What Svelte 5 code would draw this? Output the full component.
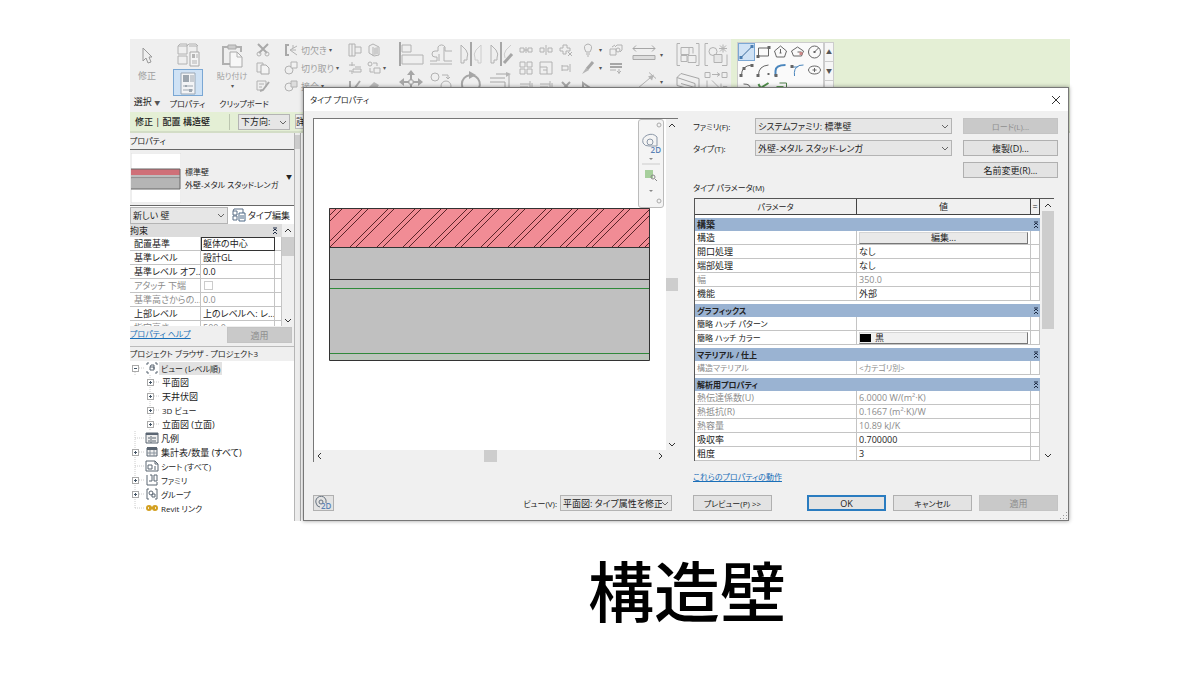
<script lang="ts">
  type Part = { d: string; fill?: string; stroke?: string; sw?: number };
  type Row = { name: string; value: string; off?: boolean; kind?: string };

  const line = (d: string, stroke = '#b2b2b2', sw = 1): Part => ({ d, stroke, sw });
  const solid = (d: string, fill = '#b5b5b5', stroke = 'none'): Part => ({ d, fill, stroke });
  const ring = (x: number, y: number, r: number) =>
    `M${x - r} ${y}a${r} ${r} 0 1 0 ${2 * r} 0a${r} ${r} 0 1 0 ${-2 * r} 0`;

  // long katakana runs are set one size down
  const isKana = (text: string) => /[ァ-ー]{3}/.test(text);

  // every icon is drawn round 0,0
  const cursor = [line('M-4-8V5L-1 2 1 7 4 6 2 1H5Z', '#999')];
  const typeBox = [
    line('M-10-9h9v8h-9zM1-9h8v8M-10 1h9v8h-9zM-10-9l2-2h7v2l2-2h7l2 2'),
    solid('M2-3h9v14H2z', '#f4f4f4', '#a9a9a9'),
    solid('M4-1h3v4H4z'),
    line('M9-1v4M4 6h5M4 8h5')
  ];
  const properties = [
    solid('M-7-10H7V11H-7z', '#f3f4f6', '#9aa7b5'),
    solid('M-5-8H1V-1H-5z', '#9da6af'),
    line('M3-8v7M5-8v7', '#9da6af'),
    line('M-5 3H5M-5 7H5', '#9da6af'),
    solid('M-3 2h2v2h-2zM1 6h3v3H1z', '#9da6af')
  ];
  const paste = [
    line('M-3-9h-6V8h7M4-9h5v5', '#b0b0b0', 2),
    solid('M-4-11h8v4h-8z', '#ccc', '#a9a9a9'),
    solid('M-2-4H5L10 1V11H-2z', '#f7f7f7', '#a9a9a9'),
    line('M5-4V1h5')
  ];
  const cut = [line('M-5-6 4 3M5-6-4 3', '#a9a9a9', 2), line(ring(-4, 4, 2)), line(ring(4, 4, 2))];
  const copy = [line('M-6-5h6v9h-6z'), solid('M-2-3H3L6 0V6h-8z', '#f4f4f4', '#a9a9a9')];
  const brush = [line('M-6-5H3V1M-6-5V4h5M-4-2h5M-4 1h3'), line('M6-4 0 4-3 5', '#a9a9a9', 2)];
  const cope = [line('M-5-5V5M-6-5h4M-6 5h4', '#a9a9a9', 2), line('M6-4-1 0 6 5M2-5v3M0 0h5')];
  const overlap = [line(ring(-2, 2, 4)), solid('M0-6h6v6H0z', '#f2f2f2', '#b2b2b2')];
  const join = [line(ring(-2, 1, 4)), solid('M0-5h6v6H0z', '#ddd', '#b2b2b2')];
  const wallJoin = [line('M-6-6h6v3h6v6H0v3h-6z'), line('M-3-6V6M0-3v6')];
  const splitFace = [line('M-5-4-1-6 5-3V5L0 6-5 3zM-1-3V6'), solid('M0-2 4-3V4L0 5z', '#ccc')];
  const beam = [line('M-6-3H0M-3-6v4M-2 1h8v3h-8zM-6 3h3v3'), line('M0-1h6')];
  const linkTool = [line(ring(-4, -4, 2)), line('M0 0h6v5H0zM-4 0v4h3M-1-5h4v3')];
  const edit = [line('M-5-5V5h7M5-5-1 3', '#a9a9a9', 2)];
  const hammer = [solid('M-5 1 0-4 5-1 1 5z', '#bbb')];

  const modifyBig = [
    [line('M-11-12V12', '#a6a6a6', 2), line('M-9-9H0v7h-9zM-9 1H12v9H-9z')],
    [line('M-11 7h7V3h-2a3 3 0 0 1 0-6h3v-4a4 4 0 0 1 7 0v4h7M-2 7V0M3-7V7h8'), line('M-11 10H11')],
    [line('M0-12V12', '#a6a6a6', 2), line('M-10 9V-9l5 5q3 4 1 8v2h-3v3z'), { ...line('M10 9V-9L5-4Q2 0 4 4v2h3v3z'), stroke: '#ccc' }],
    [line('M0-12V12', '#a6a6a6', 2), line('M-10 9V-9l5 5q3 4 1 8v2h-3v3z'), line('M10-9 5-4Q2 0 4 4', '#ccc'), line('M11 0 3 9', '#a6a6a6', 3)],
    [line('M0-9V9M-9 0H9', '#a6a6a6', 2), solid('M-4-7 0-12 4-7zM-4 7 0 12 4 7zM-7-4-12 0-7 4zM7-4 12 0 7 4z', '#a6a6a6'), solid('M-2-2h4v4h-4z', '#f0f0f0', '#a6a6a6')],
    [line(ring(-6, -5, 4)), line(ring(5, 4, 5)), line('M1-7h6v4M5-5l2 2 2-2')],
    [line('M-7 8A9 9 0 1 1 8 6', '#a6a6a6', 2), solid('M-2-11 5-7-2-3z', '#a6a6a6')],
    [line('M-11-4H4M-11 0H4V11M8-7V11M-5-8H8', '#a6a6a6'), solid('M5-10 10-8 5-5z')]
  ];
  const modifySmall = [
    [line('M-6-2h4v4h-4zM2-2h4v4H2zM-2 0h4M0-3v6')],
    [line('M-6-2h4v4h-4zM2-2h4v4H2zM0-5V5')],
    [line('M-6-2h3v-3h4v3h3v3h-4v3h-3v-3h-3zM2 2l4 4M6 2 2 6')],
    [line('M-6-6h5v5h-5zM1-6h5v5H1zM-6 1h5v5h-5zM1 1h5v5H1z')],
    [line('M-6-6H6V6H-6zM-6-1H1V6M-3 2h4')],
    [line('M-4-3v6M-4-2h6v4h-6M4-4v8')],
    [line('M-6-2H4M-6 1H2M4-5V5M6-3v6')],
    [line('M-6-2H4M-6 1H2M4-5V5M6-3v6')],
    [line('M-4-4 4 4M4-4-4 4', '#a6a6a6', 2)]
  ];
  const view = [
    [line('M-2 2q-4-7 2-8 6 1 2 8zM-2 4h4M-1 6h2')],
    [line('M-6-1h6v6h-6zM-1-3l2-2h5v5l-2 2M-1-5l-3 2'), line(ring(2, 0, 2))],
    [line('M5-6-1 1', '#a6a6a6', 3), solid('M-2 0-6 6 1 2z')],
    [line('M-6-4H6M-6-1H6', '#a6a6a6', 2), line('M-6 2h6M3 1v5M1 3l2 2 2-2')],
    [line('M-5-3 5 4h-10z', '#a6a6a6', 2)],
    []
  ];
  const measure = [
    [line('M-11-6H11M-8-9l-3 3 3 3M8-9l3 3-3 3', '#a6a6a6'), solid('M-11 1h22v4h-22z', '#ddd', '#a9a9a9')],
    [line('M-9 9 9-6M5-9l7 6M-12 6l6 6'), solid('M4-5 10-7 8-1z')]
  ];
  const create = [
    [line('M-8-11h-3v22h3M8-11h3v22H8'), line('M-7-7h8v7h-8zM-7 1h6v6h-6zM0 1h8v7H0zM1-7h4v6')],
    [line('M-8-11h-3v22h3M6 11h5V0'), line(ring(-3, -3, 4)), solid('M-2 0H6v8h-8z', '#e6e6e6', '#b2b2b2'), line('M7-10v8M3-6h8M4-9l6 6M10-9 4-3')],
    [line('M-11-4-7-8 11-3V10L-11 4zM-11-4 7 2v9M-7 2 7 6', '#a6a6a6')],
    [line('M-11-9h5v5h-5zM6-9h5v5H6zM-4-7h7M1-9l3 2-3 2M-9-1V7M-4-1 3 6M1 6h4V2M7 5h4v4H7z')]
  ];
  const dark = '#666';
  const blue = '#4a86bd';
  const draw = [
    [line('M-5 5 5-5', '#38699a'), solid('M-7 4h3v3h-3zM4-7h3v3H4z', '#4b7db0')],
    [line('M-5-4H5V4H-5z', dark), solid('M-7 3h3v3h-3zM4-6h3v3H4z', dark)],
    [line('M0-6 6-1 4 5h-8L-6-1zM0-3v4', dark), line('M-1 1h2', dark)],
    [line('M0-5 6-1 4 4h-8L-6-1zM0 0h4', dark), solid('M2 0h3v3H2z', '#c88')],
    [line(ring(0, 0, 6), dark), line('M0 0l4-4', dark), solid('M-1-1h2v2h-2z', dark)],
    [line('M-5 5Q-5-4 5-5', dark), solid('M-7 4h3v3h-3zM4-6h3v3H4zM-4-3h3v3h-3z', dark)],
    [line('M-5 5Q-5-4 5-5', dark), solid('M-7 4h3v3h-3zM4 3h2v2H4z', dark)],
    [line('M-5 6v-5Q-5-5 5-5', blue, 2), solid('M-6 4h3v3h-3z', dark)],
    [line('M-5-3H0Q0-5 6-5M-3 6Q-4-2 1-4', blue), solid('M-7-5h3v3h-3z', dark)],
    [line('M-6 0a6 4 0 1 0 12 0 6 4 0 1 0-12 0M0-2v4M-2 0h4', dark)],
    [line('M-3-4Q5-4 3 1', dark)],
    [line('M-5-4-3 0M5-5-3 0 3 5', '#4f8f4a', 2)],
    [solid('M-4-2h7v7h-7z', '#5f9d58'), line('M-1-5h7v7', '#4d7d48')],
    [],
    []
  ];

  // lower ends of the brick hatch pairs
  const hatch = Array.from({ length: 15 }, (_, i) => 21 + 26 * (i - 2) + Math.round(i / 5));

  const instance: Row[] = [
    { name: '配置基準', value: '躯体の中心', kind: 'focus' },
    { name: '基準レベル', value: '設計GL' },
    { name: '基準レベル オフ...', value: '0.0' },
    { name: 'アタッチ 下端', value: '', off: true, kind: 'check' },
    { name: '基準高さからの...', value: '0.0', off: true },
    { name: '上部レベル', value: '上のレベルへ: レ...' },
    { name: '指定高さ', value: '500.0', off: true }
  ];

  const groups: { title: string; rows: Row[] }[] = [
    {
      title: '構築',
      rows: [
        { name: '構造', value: '編集...', kind: 'button' },
        { name: '開口処理', value: 'なし' },
        { name: '端部処理', value: 'なし' },
        { name: '幅', value: '350.0', off: true },
        { name: '機能', value: '外部' }
      ]
    },
    {
      title: 'グラフィックス',
      rows: [
        { name: '簡略 ハッチ パターン', value: '' },
        { name: '簡略 ハッチ カラー', value: '黒', kind: 'color' }
      ]
    },
    { title: 'マテリアル / 仕上', rows: [{ name: '構造マテリアル', value: '<カテゴリ別>', off: true }] },
    {
      title: '解析用プロパティ',
      rows: [
        { name: '熱伝達係数(U)', value: '6.0000 W/(m²·K)', off: true },
        { name: '熱抵抗(R)', value: '0.1667 (m²·K)/W', off: true },
        { name: '熱容量', value: '10.89 kJ/K', off: true },
        { name: '吸収率', value: '0.700000' },
        { name: '粗度', value: '3' }
      ]
    }
  ];

  const slate = '#5b6673';
  const tree: { label: string; sub?: boolean; box?: string; icon?: Part[]; picked?: boolean }[] = [
    { label: 'ビュー (レベル順)', box: '-', picked: true, icon: [line('M-3-5h-2v2M3-5h2v2M-3 5h-2V3M3 5h2V3M-2-1h4v3h-4zM-2-1l1-2h3v4', slate)] },
    { label: '平面図', sub: true, box: '+' },
    { label: '天井伏図', sub: true, box: '+' },
    { label: '3D ビュー', sub: true, box: '+' },
    { label: '立面図 (立面)', sub: true, box: '+' },
    { label: '凡例', icon: [solid('M-6-5H6V5H-6z', '#eee', slate), solid('M-6-5H6v2H-6z', slate), line('M-4 0h2M-4 3h2M0 0h4M0 3h4M-1-2V5', slate)] },
    { label: '集計表/数量 (すべて)', box: '+', icon: [solid('M-5-4H5V4H-5z', '#eee', slate), solid('M-5-5H5v3H-5z', slate), line('M-2-2v6M2-2v6M-5 1H5', '#8a949e')] },
    { label: 'シート (すべて)', icon: [solid('M-6-5H3L6-2V5H-6z', '#fff', slate), line('M3-5v3h3M-4-1h4v4h-4zM2 1h2M2 3h2', slate)] },
    { label: 'ファミリ', box: '+', icon: [line('M-5-5V5H5V2M-2-5H0V1h-3M2-5h3v6H2z', slate)] },
    { label: 'グループ', box: '+', icon: [line('M-3-5h-2V5h2M3-5h2V5H3M0 0h3v3H0z', slate), line(ring(-1, -1, 2), slate)] },
    { label: 'Revit リンク', icon: [line('M-5 0a2 2 0 0 1 4 0a2 2 0 0 1-4 0M1 0a2 2 0 0 1 4 0a2 2 0 0 1-4 0M-3 0h6', '#d3a021', 2)] }
  ];
</script>

{#snippet icon(w: number, h: number, parts: Part[])}
  <svg width={w} height={h} viewBox="{-w / 2} {-h / 2} {w} {h}" aria-hidden="true">
    {#each parts as p}
      <path d={p.d} fill={p.fill ?? 'none'} stroke={p.stroke} stroke-width={p.sw ?? 1} />
    {/each}
  </svg>
{/snippet}

{#snippet tools(cls: string, w: number, h: number, list: Part[][])}
  <div class="tools {cls}">
    {#each list as parts, i}
      <button class="tool" aria-label="{cls} {i + 1}">{@render icon(w, h, parts)}</button>
    {/each}
  </div>
{/snippet}

{#snippet pick(id: string, text: string, label?: string)}
  <span class="pick">
    <select {id} aria-label={label}><option>{text}</option></select>
    {@render icon(8, 6, [line('M-3-1 0 2 3-1', '#666')])}
  </span>
{/snippet}

{#snippet chevrons()}
  {@render icon(6, 8, [line('M-2 0 0-2 2 0M-2 3 0 1 2 3M-2-3h4', '#1d2b44')])}
{/snippet}

{#snippet up()}
  {@render icon(12, 12, [line('M-3 2 0-1 3 2', '#333', 1)])}
{/snippet}

{#snippet down()}
  {@render icon(12, 12, [line('M-3-1 0 2 3-1', '#333', 1)])}
{/snippet}

<main class="slide">
  <div class="app">
    <header class="ribbon">
      <section class="group select">
        <button class="tool tall">{@render icon(20, 22, cursor)}<span>修正</span></button>
        <h2>選択 <small>▼</small></h2>
      </section>
      <section class="group props">
        <button class="tool" aria-label="タイプ">{@render icon(26, 28, typeBox)}</button>
        <button class="tool on" aria-label="プロパティ">{@render icon(26, 24, properties)}</button>
        <h2 class="kana">プロパティ</h2>
      </section>
      <section class="group clip">
        <div class="pair">
          <button class="tool tall">{@render icon(26, 26, paste)}<span class="kana">貼り付け</span><small>▾</small></button>
          {@render tools('stack', 16, 18, [cut, copy, brush])}
        </div>
        <h2 class="kana">クリップボード</h2>
      </section>
      <section class="group geometry">
        <div class="labelled">
          <button class="tool">{@render icon(16, 18, cope)}切欠き<small>▾</small></button>
          <button class="tool">{@render icon(16, 18, overlap)}切り取り<small>▾</small></button>
          <button class="tool">{@render icon(16, 18, join)}接合<small>▾</small></button>
        </div>
        {@render tools('double', 18, 18, [wallJoin, splitFace, beam, linkTool, edit, hammer])}
        <small>▾</small>
      </section>
      {@render tools('modify', 30, 28, modifyBig)}
      {@render tools('array', 20, 18, modifySmall)}
      <section class="with-arrows">
        {@render tools('view', 24, 18, view)}
        <div class="arrows near"><small>▾</small><small>▾</small></div>
      </section>
      <section class="with-arrows">
        {@render tools('measure', 32, 27, measure)}
        <div class="arrows"><small>▾</small><small>▾</small></div>
      </section>
      {@render tools('create', 28, 27, create)}
      <section class="drawing">
        {@render tools('draw', 17, 18, draw)}
        <div class="spin">
          <button class="tool" aria-label="上へ"><small>▲</small></button>
          <button class="tool" aria-label="下へ"><small>▼</small></button>
        </div>
      </section>
    </header>

    <div class="options">
      <strong>修正 | 配置 構造壁</strong>
      {@render pick('direction', '下方向:', '方向')}
      <span class="next">詳</span>
    </div>

    <div class="work">
      <aside>
        <h3 class="kana">プロパティ</h3>
        <div class="type">
          <svg class="thumb" viewBox="0 0 50 50" aria-hidden="true">
            <path d="M0 0h50v50H0z" fill="#fff" stroke="#ddd" />
            <path d="M0 16h49v6H0z" fill="#cf7078" />
            <path d="M0 22h49v3H0z" fill="#bdbdbd" />
            <path d="M0 26h49v10H0z" fill="#b5b5b5" />
            <path d="M0 16h49v20H0M0 25h49" fill="none" stroke="#666" />
          </svg>
          <p>標準壁<br />外壁-メタル スタッド-レンガ</p>
          <small>▼</small>
        </div>
        <div class="filter">
          {@render pick('category', '新しい 壁', 'カテゴリ')}
          <button class="tool edit">
            {@render icon(14, 14, [line('M-6-4h4v4h-4zM0-6h4v4M-6 1h4v4h-4zM-6-4l1-2h5', '#5b6f86'), solid('M0-2h6v8H0z', '#fff', '#4d6886'), line('M1 1h4M1 3h4', '#4d6886')])}
            タイプ編集
          </button>
        </div>
        <div class="scrolling">
          <div class="grid">
            <div class="section">拘束 {@render chevrons()}</div>
            <table>
              <tbody>
                {#each instance as row}
                  <tr class:off={row.off}>
                    <th>{row.name}</th>
                    <td class={row.kind}>
                      {#if row.kind === 'check'}<input type="checkbox" disabled aria-label={row.name} />{:else}{row.value}{/if}
                    </td>
                    <td class="end"></td>
                  </tr>
                {/each}
              </tbody>
            </table>
          </div>
          <div class="bar">
            {@render up()}
            <i class="thumb-small"></i>
            {@render down()}
          </div>
        </div>
        <div class="apply">
          <a class="kana" href="#help">プロパティ ヘルプ</a>
          <button class="btn" disabled>適用</button>
        </div>
        <h3 class="browser">プロジェクト ブラウザ - プロジェクト3</h3>
        <ul>
          {#each tree as node, i}
            <li class:sub={node.sub}>
              <svg class="gutter" width="15" height="14" viewBox="0 0 15 14" aria-hidden="true">
                <path d="M5 {i ? 0 : 7}V{i === 10 ? 7 : 14}M5 7H14" stroke="#ccc" stroke-dasharray="1 1" fill="none" />
                {#if node.box}
                  <rect x="2" y="4" width="7" height="7" fill="#aaa" />
                  <rect x="3" y="5" width="5" height="5" fill="#fff" />
                  <rect x="4" y="7" width="3" height="1" fill="#456" />
                  {#if node.box === '+'}<rect x="5" y="6" width="1" height="3" fill="#456" />{/if}
                {/if}
              </svg>
              {#if node.icon}{@render icon(14, 14, node.icon)}{/if}
              <span class:picked={node.picked} class:kana={isKana(node.label)}>{node.label}</span>
            </li>
          {/each}
        </ul>
      </aside>
      <div class="canvas-edge"><i></i></div>
    </div>

    <div class="dialog" role="dialog" aria-labelledby="dialog-title">
      <div class="titlebar">
        <h1 id="dialog-title" class="kana">タイプ プロパティ</h1>
        <button class="tool" aria-label="閉じる">{@render icon(10, 10, [line('M-4-4 4 4M4-4-4 4', '#333')])}</button>
      </div>
      <div class="body">
        <div class="left">
          <div class="viewer">
            <div class="canvas">
              <svg class="wall" viewBox="0 0 321 153" preserveAspectRatio="none" aria-hidden="true">
                <path d="M0 0h321v39H0z" fill="#f18c95" />
                <path d="M0 39h321v113H0z" fill="#c0c0c0" />
                <path d="M0 147h321v5H0z" fill="#bcc6bc" />
                {#each hatch as x}
                  <path d="M{x} 39 l39 -39 M{x + 6} 39 l39 -39" stroke="#5c2429" fill="none" />
                {/each}
                <path d="M0 80.5h321M0 145.5h321" stroke="#2f8a3a" />
                <path d="M0 71.5h321M0 39.5h321" stroke="#333" />
                <path d="M.5 .5h320v152H.5z" fill="none" stroke="#333" />
              </svg>
              <div class="nav">
                {@render icon(24, 86, [
                  line(ring(8, -38, 2), '#aaa'),
                  line(ring(8, 38, 2), '#aaa'),
                  line('M-8-20a8 7 0 0 1 14-6v9h-8a6 5 0 0 1-6-3', '#8c98a8'),
                  line(ring(-1, -21, 3), '#8c98a8'),
                  line('M-9 1H9', '#ccc'),
                  solid('M-6 7H2v8H-6z', '#a6cf9c'),
                  line(ring(2, 14, 2), '#888'),
                  line('M4 16l2 2', '#888'),
                  solid('M-2-5H2L0-3zM-2 27H2L0 29z', '#888')
                ])}
                <b>2D</b>
              </div>
            </div>
            <div class="bar">
              {@render up()}
              <i class="thumb-mid"></i>
              {@render down()}
            </div>
            <div class="bar flat">
              {@render icon(12, 12, [line('M1-3-2 0 1 3', '#333', 1)])}
              <i></i>
              {@render icon(12, 12, [line('M-1-3 2 0-1 3', '#333', 1)])}
            </div>
          </div>
          <div class="foot">
            <button class="btn wheel" aria-label="ホイール">
              {@render icon(16, 14, [line('M-6 0a5 5 0 0 1 10-3v3M-6 0q1 4 4 4', '#66727f'), line(ring(-1, -1, 2), '#66727f')])}<b>2D</b>
            </button>
            <label class="kana" for="view">ビュー(V):</label>
            {@render pick('view', '平面図: タイプ属性を修正')}
          </div>
        </div>

        <div class="right">
          <div class="form">
            <label class="kana" for="family">ファミリ(F):</label>
            {@render pick('family', 'システムファミリ: 標準壁')}
            <button class="btn kana" disabled>ロード(L)...</button>
            <label class="kana" for="type">タイプ(T):</label>
            {@render pick('type', '外壁-メタル スタッド-レンガ')}
            <button class="btn">複製(D)...</button>
            <button class="btn rename">名前変更(R)...</button>
          </div>
          <p class="caption kana">タイプ パラメータ(M)</p>
          <div class="scrolling params">
            <table>
              <thead>
                <tr><th class="kana">パラメータ</th><th>値</th><th class="end">=</th></tr>
              </thead>
              {#each groups as group}
                <tbody>
                  <tr class="cat">
                    <th colspan="2" class:kana={isKana(group.title)}>{group.title}</th>
                    <td>{@render chevrons()}</td>
                  </tr>
                  {#each group.rows as row}
                    <tr class:off={row.off}>
                      <th class:kana={isKana(row.name)}>{row.name}</th>
                      <td class:kana={isKana(row.value)}>
                        {#if row.kind === 'button'}
                          <button class="cell">{row.value}</button>
                        {:else if row.kind === 'color'}
                          <button class="cell color"><i></i>{row.value}</button>
                        {:else}
                          {row.value}
                        {/if}
                      </td>
                      <td class="end"></td>
                    </tr>
                  {/each}
                </tbody>
              {/each}
            </table>
            <div class="bar">
              {@render up()}
              <i class="thumb-long"></i>
              {@render down()}
            </div>
          </div>
          <a class="kana" href="#behavior">これらのプロパティの動作</a>
          <div class="foot">
            <button class="btn preview kana">プレビュー(P) &gt;&gt;</button>
            <button class="btn ok">OK</button>
            <button class="btn kana">キャンセル</button>
            <button class="btn" disabled>適用</button>
          </div>
        </div>
      </div>
      <svg class="grip" width="8" height="8" viewBox="0 0 8 8" aria-hidden="true">
        <path d="M6 0h1v1H6zM6 3h1v1H6zM3 3h1v1H3zM6 6h1v1H6zM3 6h1v1H3zM0 6h1v1H0z" fill="#999" />
      </svg>
    </div>
  </div>

  <p class="word">構造壁</p>
</main>

<style>
  :global(body) {
    background: #fff;
  }

  .slide,
  .slide button,
  .slide select {
    font-family: 'Open Sans', 'Noto Sans CJK JP', sans-serif;
    font-size: 9px;
    line-height: 13px;
    font-feature-settings: 'palt';
    color: #222;
  }

  .slide {
    padding: 39px 130px 0;
  }

  .slide *,
  .slide {
    box-sizing: border-box;
  }

  h1,
  h2,
  h3,
  p,
  ul {
    margin: 0;
    padding: 0;
    font-size: 9px;
    font-weight: 400;
    list-style: none;
  }

  .slide .kana {
    font-size: 8px;
  }

  svg {
    display: block;
    flex: none;
  }

  small {
    font-size: 6px;
  }

  a {
    align-self: flex-start;
    color: #1a6fb8;
  }

  .app {
    position: relative;
    background: #f0f0f0;
    white-space: nowrap;
  }

  /* ribbon */
  .ribbon {
    display: flex;
    height: 73px;
    background: #efefef;
    overflow: hidden;
  }

  .tool {
    display: flex;
    align-items: center;
    justify-content: center;
    border: 0;
    padding: 0;
    background: none;
  }

  .ribbon .tool {
    color: #a0a0a0;
  }

  .ribbon small {
    color: #555;
  }

  .tall {
    flex-direction: column;
  }

  .group {
    display: flex;
    flex-direction: column;
    align-items: center;
    padding: 2px 0;
    flex: none;
  }

  .group h2 {
    margin-top: auto;
  }

  .select {
    width: 34px;
  }

  .select .tool {
    gap: 2px;
    padding-top: 4px;
  }

  .props {
    width: 47px;
  }

  .tool.on {
    width: 30px;
    height: 27px;
    background: #cfe2f5;
    border: 1px solid #7aa7d4;
  }

  .clip {
    width: 66px;
    margin-right: 6px;
  }

  .pair {
    display: flex;
    align-items: flex-start;
    gap: 8px;
    height: 53px;
  }

  .pair .tall {
    padding-top: 2px;
    line-height: 14px;
  }

  .pair .tall small {
    line-height: 6px;
  }

  .tools {
    display: grid;
    align-content: start;
    flex: none;
  }

  .geometry {
    flex-direction: row;
    align-items: flex-start;
    width: 111px;
  }

  .geometry > small {
    line-height: 54px;
  }

  .labelled {
    width: 62px;
  }

  .labelled .tool {
    gap: 2px;
    height: 18px;
  }

  .double {
    grid-template-columns: 20px 18px;
  }

  .modify {
    grid-template-columns: repeat(4, 30px);
    padding-top: 1px;
    margin-left: 2px;
  }

  .array {
    grid-template-columns: repeat(3, 20px);
    padding-top: 2px;
  }

  .with-arrows {
    display: flex;
  }

  .arrows {
    display: grid;
    grid-template-rows: 27px 27px;
    width: 14px;
    padding-top: 3px;
    line-height: 27px;
  }

  .near {
    order: -1;
    grid-template-rows: 18px 18px;
    width: 0;
    padding: 2px 0 0 24px;
    line-height: 18px;
  }

  .near + .tools,
  .view {
    grid-template-columns: 24px 24px;
    padding-top: 2px;
  }

  .with-arrows .view {
    column-gap: 4px;
    margin-right: -24px;
  }

  .with-arrows .near {
    order: 0;
    margin-left: -5px;
    padding-left: 0;
    width: 29px;
  }

  .measure {
    padding-top: 2px;
  }

  .create {
    grid-template-columns: 28px 28px;
    padding-top: 2px;
    margin-right: 1px;
  }

  .drawing {
    display: flex;
    flex: 1;
    padding: 3px 0 0 6px;
    background: #e4efd5;
  }

  .draw {
    grid-template-columns: repeat(5, 17px);
    background: #fafafa;
    border: 1px solid #ccc;
  }

  .draw .tool:first-child {
    background: #cfe2f5;
    outline: 1px solid #7aa7d4;
    outline-offset: -1px;
  }

  .spin {
    display: grid;
    grid-template-rows: 19px 19px 19px;
    width: 10px;
    background: #f6f6f6;
    border: 1px solid #ccc;
  }

  .spin .tool {
    border-bottom: 1px solid #ccc;
  }

  /* option bar */
  .options {
    display: flex;
    align-items: center;
    height: 21px;
    padding: 1px 0 1px 5px;
    background: #e4efd5;
    border-bottom: 2px solid #d3ddc6;
  }

  .options strong {
    width: 95px;
    line-height: 16px;
    border-right: 1px solid #bcc6b0;
    margin-right: 8px;
    font-weight: 500;
  }

  .options .pick {
    width: 52px;
    margin-right: 5px;
  }

  .options .next {
    border: 1px solid #bbb;
    background: #eee;
    width: 60px;
  }

  .pick {
    display: grid;
    grid-template-columns: 1fr 11px;
    align-items: center;
    height: 16px;
    min-width: 0;
  }

  .pick select {
    grid-area: 1 / 1 / 2 / 3;
    width: 100%;
    height: 100%;
    appearance: none;
    padding: 0 9px 0 2px;
    border: 1px solid #b4b4b4;
    border-radius: 0;
    background: #e6e6e6;
  }

  .pick :global(svg) {
    grid-area: 1 / 2;
    pointer-events: none;
  }

  /* side panels */
  .work {
    display: flex;
    background: #fff;
  }

  aside {
    width: 165px;
    flex: none;
    border-right: 1px solid #b5b5b5;
    background: #fff;
  }

  h3 {
    height: 17px;
    line-height: 16px;
    background: #efefef;
    border-bottom: 1px solid #666;
  }

  .type {
    display: flex;
    align-items: center;
    height: 56px;
    gap: 4px;
    padding-left: 1px;
    border-bottom: 1px solid #666;
    background: #efefef;
  }

  .type p {
    font-size: 8px;
    flex: 1;
  }

  .type small {
    padding-right: 2px;
  }

  .thumb {
    width: 50px;
    height: 50px;
  }

  .filter {
    display: flex;
    align-items: center;
    height: 18px;
    background: #fff;
  }

  .filter .pick {
    width: 98px;
    height: 17px;
  }

  .edit {
    gap: 2px;
    margin-left: 4px;
  }

  .scrolling {
    display: flex;
  }

  aside .scrolling {
    height: 102px;
    overflow: hidden;
  }

  .grid {
    flex: 1;
    min-width: 0;
  }

  .section {
    display: flex;
    align-items: center;
    justify-content: space-between;
    height: 13px;
    padding-right: 4px;
    background: #dcdcdc;
  }

  table {
    width: 100%;
    table-layout: fixed;
    border-collapse: separate;
    border-spacing: 0;
    background: #fff;
  }

  th,
  td {
    height: 14px;
    padding: 0 2px;
    border: 0 solid #c4c4c4;
    border-width: 0 1px 1px 0;
    font-weight: 400;
    text-align: left;
    line-height: 13px;
    overflow: hidden;
  }

  .off th,
  .off td {
    color: #8c8c8c;
  }

  aside th {
    width: 71px;
    padding: 0 0 0 4px;
  }

  aside td {
    padding-right: 0;
  }

  .end {
    width: 9px;
    padding: 0;
    text-align: center;
  }

  aside .end {
    width: 7px;
  }

  td.focus {
    outline: 1px solid #333;
    outline-offset: -1px;
  }

  td input {
    display: block;
    appearance: none;
    width: 9px;
    height: 9px;
    margin: 0 0 0 1px;
    border: 1px solid #ccc;
  }

  .bar {
    display: flex;
    flex-direction: column;
    align-items: center;
    justify-content: space-between;
    width: 12px;
    background: #f0f0f0;
  }

  .bar i {
    width: 12px;
    background: #cdcdcd;
  }

  .thumb-small {
    height: 19px;
    margin-bottom: 58px;
  }

  .thumb-mid {
    height: 13px;
  }

  .thumb-long {
    height: 118px;
    margin-bottom: 120px;
  }

  .apply {
    display: flex;
    align-items: flex-start;
    justify-content: space-between;
    height: 21px;
    padding: 1px 2px 0 0;
    background: #efefef;
    border-bottom: 1px solid #bbb;
  }

  .apply .btn {
    width: 65px;
  }

  .browser {
    height: 14px;
    font-size: 8px;
    line-height: 14px;
    border-bottom: 0;
  }

  ul {
    padding-bottom: 6px;
  }

  li {
    display: flex;
    align-items: center;
    height: 14px;
  }

  li span {
    padding: 0 2px;
  }

  li.sub {
    padding-left: 15px;
  }

  .picked {
    background: #e2e2e2;
  }

  .canvas-edge {
    width: 6px;
    background: #ececec;
    border-right: 1px solid #aaa;
  }

  .canvas-edge i {
    display: block;
    height: 14px;
    margin-top: 2px;
    background: #ccc;
  }

  /* type properties dialog */
  .dialog {
    position: absolute;
    top: 48px;
    left: 173px;
    right: 1px;
    bottom: 0;
    display: flex;
    flex-direction: column;
    border: 1px solid #777;
    background: #f0f0f0;
    box-shadow: 0 0 4px rgba(0, 0, 0, 0.4);
  }

  .grip {
    position: absolute;
    right: 0;
    bottom: 0;
  }

  .titlebar {
    display: flex;
    align-items: center;
    justify-content: space-between;
    height: 23px;
    padding: 0 7px 0 6px;
    background: #fff;
  }

  .body {
    display: flex;
    flex: 1;
    gap: 15px;
    padding: 7px 10px 9px 9px;
  }

  .left,
  .right {
    display: flex;
    flex-direction: column;
    flex: 1;
    min-width: 0;
  }

  .viewer {
    display: grid;
    grid-template: 331px 12px / 1fr 12px;
    border-top: 1px solid #777;
    border-left: 1px solid #777;
  }

  .canvas {
    position: relative;
    padding: 89px 16px 0 15px;
    background: #fff;
  }

  .wall {
    width: 100%;
    height: 153px;
  }

  .nav {
    position: absolute;
    top: 0;
    right: 2px;
    width: 26px;
    height: 89px;
    border: 1px solid #bbb;
    border-radius: 3px;
    background: #f4f4f4;
  }

  .nav b {
    position: absolute;
    top: 25px;
    right: 2px;
    line-height: 10px;
  }

  .slide b {
    font-size: 8px;
    font-weight: 600;
    color: #5a83b5;
  }

  .flat {
    flex-direction: row;
    width: auto;
  }

  .flat i {
    width: 13px;
    height: 12px;
  }

  .foot {
    display: flex;
    align-items: center;
    margin-top: auto;
  }

  .left .foot {
    padding-right: 6px;
  }

  .left .pick {
    width: 112px;
    margin-left: 3px;
  }

  .btn {
    height: 16px;
    padding: 0;
    border: 1px solid #b0b0b0;
    background: #e3e3e3;
    line-height: 13px;
  }

  .slide .btn:disabled {
    background: #c9c9c9;
    border-color: #c4c4c4;
    color: #8f8f8f;
  }

  .wheel {
    display: flex;
    align-items: flex-end;
    width: 21px;
    margin-right: auto;
  }

  .wheel b {
    margin-left: -9px;
    line-height: 9px;
  }

  .form {
    display: grid;
    grid-template-columns: 62px 1fr 95px;
    grid-auto-rows: 16px;
    row-gap: 6px;
    align-items: center;
  }

  .form .pick {
    margin-right: 11px;
  }

  .rename {
    grid-column: 3;
  }

  .caption {
    padding: 3px 0 4px;
  }

  .params {
    height: 263px;
    margin: 0 4px 0 1px;
    border-top: 1px solid #555;
    border-left: 1px solid #555;
  }

  .params table {
    flex: 1;
    width: auto;
    align-self: flex-start;
    margin-right: 2px;
  }

  .params thead th {
    height: 16px;
    width: auto;
    background: #f0f0f0;
    border-color: #444;
    text-align: center;
  }

  .params thead th:first-child {
    width: 162px;
  }

  .params thead th.end {
    width: 9px;
    padding: 0;
  }

  .params .cat th,
  .params .cat td {
    height: 16px;
    padding-right: 0;
    background: #9ab3d2;
    border: 0;
    border-top: 3px solid #fff;
    font-weight: 600;
  }

  .slide .cell {
    display: block;
    width: 100%;
    height: 12px;
    padding: 0;
    border: 1px solid #d5d5d5;
    border-right-color: #777;
    border-bottom-color: #777;
    background: #e9e9e9;
    line-height: 10px;
  }

  .slide .color {
    display: flex;
    align-items: center;
    gap: 4px;
    background: #f0f0f0;
  }

  .color i {
    width: 11px;
    height: 8px;
    background: #000;
  }

  .right > a {
    margin-top: 9px;
  }

  .right .foot {
    gap: 7px;
  }

  .right .foot .btn {
    width: 79px;
  }

  .right .foot .preview {
    margin-right: auto;
  }

  .right .foot .ok {
    border: 2px solid #2a7cc0;
    line-height: 11px;
  }

  .word {
    padding: 34px 0 0 174px;
    font-size: 66px;
    font-weight: 500;
    line-height: 72px;
    text-align: center;
    color: #000;
  }
</style>
